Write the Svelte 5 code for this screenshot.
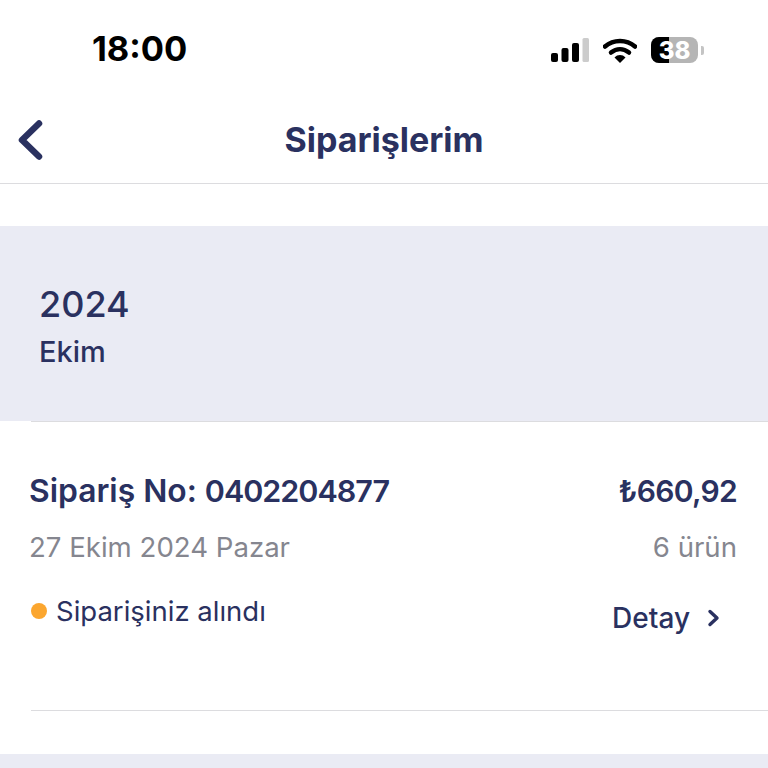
<script lang="ts">
  const order = {
    no: '0402204877',
    total: '₺660,92',
    date: '27 Ekim 2024 Pazar',
    items: '6 ürün',
    status: 'Siparişiniz alındı'
  };
</script>

<div class="screen">
  <div class="status-bar">
    <span class="time">18:00</span>
    <div class="status-icons">
      <svg class="signal" width="38" height="24" viewBox="0 0 38 24">
        <rect x="0" y="15" width="7" height="9" rx="2" fill="#000" />
        <rect x="10.500" y="10" width="7" height="14" rx="2" fill="#000" />
        <rect x="21" y="5" width="7" height="19" rx="2" fill="#000" />
        <rect x="31.500" y="0" width="6.500" height="24" rx="1.500" fill="#ccc" />
      </svg>
      <svg class="wifi" width="34" height="25" viewBox="0 0 34 25">
        <path d="M2 8.500C10.500 1 23.500 1 32 8.500" fill="none" stroke="#000" stroke-width="4.500" stroke-linecap="round" />
        <path d="M8 14.500C13.500 10 20.500 10 26 14.500" fill="none" stroke="#000" stroke-width="4.500" stroke-linecap="round" />
        <path d="M11.500 19.500C14.500 16.200 19.500 16.200 22.500 19.500L17 25Z" fill="#000" />
      </svg>
      <div class="battery">
        <div class="battery-body">
          <div class="battery-fill"></div>
          <span class="battery-level">38</span>
        </div>
        <div class="battery-cap"></div>
      </div>
    </div>
  </div>

  <header class="nav">
    <button class="back" aria-label="Geri">
      <svg width="26" height="40" viewBox="0 0 26 40">
        <path d="M22 3.500L5 20L22 36.500" fill="none" stroke="#2a3160" stroke-width="6.500" stroke-linecap="round" stroke-linejoin="round" />
      </svg>
    </button>
    <h1>Siparişlerim</h1>
  </header>

  <section class="group">
    <div class="year">2024</div>
    <div class="month">Ekim</div>
  </section>

  <div class="order">
    <div class="row top">
      <span class="order-no">Sipariş No: <span class="digits">{order.no}</span></span>
      <span class="total">{order.total}</span>
    </div>
    <div class="row meta">
      <span>{order.date}</span>
      <span>{order.items}</span>
    </div>
    <div class="row bottom">
      <span class="status"><i class="dot"></i>{order.status}</span>
      <span class="detail">
        Detay
        <svg width="14" height="18" viewBox="0 0 14 18">
          <path d="M3 2.500L10 9L3 15.500" fill="none" stroke="#2a3160" stroke-width="3.400" stroke-linecap="round" stroke-linejoin="round" />
        </svg>
      </span>
    </div>
  </div>

  <div class="next-group"></div>
</div>

<style>
  :global(body) {
    margin: 0;
    background: #fff;
  }

  .screen {
    width: 768px;
    height: 768px;
    overflow: hidden;
    background: #fff;
    color: #2a3160;
    font-family: Inter, "Liberation Sans", sans-serif;
  }

  .status-bar {
    height: 96px;
    display: flex;
    justify-content: space-between;
    align-items: flex-start;
    padding: 0 64px 0 92px;
    box-sizing: border-box;
  }

  .time {
    margin-top: 29px;
    font-size: 34.500px;
    line-height: 40px;
    font-weight: 700;
    color: #000;
  }

  .status-icons {
    display: flex;
    align-items: center;
    gap: 14px;
    margin-top: 37px;
  }

  .battery {
    display: flex;
    align-items: center;
    gap: 3px;
  }

  .battery-body {
    position: relative;
    width: 47px;
    height: 26px;
    border-radius: 8px;
    background: #b5b5b5;
    overflow: hidden;
    display: flex;
    align-items: center;
    justify-content: center;
  }

  .battery-fill {
    position: absolute;
    left: 0;
    top: 0;
    bottom: 0;
    width: 18px;
    background: #000;
  }

  .battery-level {
    position: relative;
    font-size: 24px;
    font-weight: 800;
    color: #fff;
  }

  .battery-cap {
    width: 3px;
    height: 9px;
    border-radius: 0 2px 2px 0;
    background: #c4c4c4;
  }

  .nav {
    height: 88px;
    position: relative;
    display: flex;
    align-items: center;
    justify-content: center;
    border-bottom: 1px solid #dcdcdf;
    box-sizing: border-box;
  }

  .back {
    position: absolute;
    left: 17px;
    top: 24px;
    padding: 0;
    border: 0;
    background: none;
    line-height: 0;
  }

  h1 {
    margin: 0;
    font-size: 34px;
    font-weight: 700;
    color: #2a3160;
  }

  .group {
    margin-top: 42px;
    height: 195px;
    background: #eaebf4;
    padding: 56px 0 0 39px;
    box-sizing: border-box;
  }

  .year {
    font-size: 36px;
    line-height: 44px;
    font-weight: 500;
  }

  .month {
    margin-top: 9px;
    font-size: 29px;
    line-height: 34px;
    font-weight: 500;
  }

  .order {
    margin-left: 31px;
    height: 290px;
    padding: 0 31px 0 0;
    box-sizing: border-box;
    border-top: 1px solid #dcdcdf;
    border-bottom: 1px solid #dcdcdf;
  }

  .row {
    display: flex;
    justify-content: space-between;
    margin-left: -2px;
  }

  .top {
    padding-top: 49px;
    font-size: 31.800px;
    line-height: 40px;
    font-weight: 600;
  }

  .digits {
    font-size: 30.500px;
    letter-spacing: -1px;
  }

  .total {
    font-size: 30px;
    letter-spacing: -0.7px;
  }

  .meta {
    margin-top: 16px;
    font-size: 27.600px;
    line-height: 40px;
    color: #85868f;
  }

  .bottom {
    margin-top: 27px;
    align-items: flex-start;
    margin-left: 0;
  }

  .status {
    display: flex;
    align-items: center;
    font-size: 27.500px;
    line-height: 34px;
  }

  .dot {
    width: 16px;
    height: 16px;
    border-radius: 50%;
    background: #fba62f;
    margin-right: 9px;
  }

  .detail {
    display: flex;
    align-items: center;
    gap: 17px;
    margin: 7px 16px 0 0;
    font-size: 28px;
    line-height: 34px;
    font-weight: 500;
  }

  .next-group {
    margin-top: 43px;
    height: 20px;
    background: #eaebf4;
  }
</style>
